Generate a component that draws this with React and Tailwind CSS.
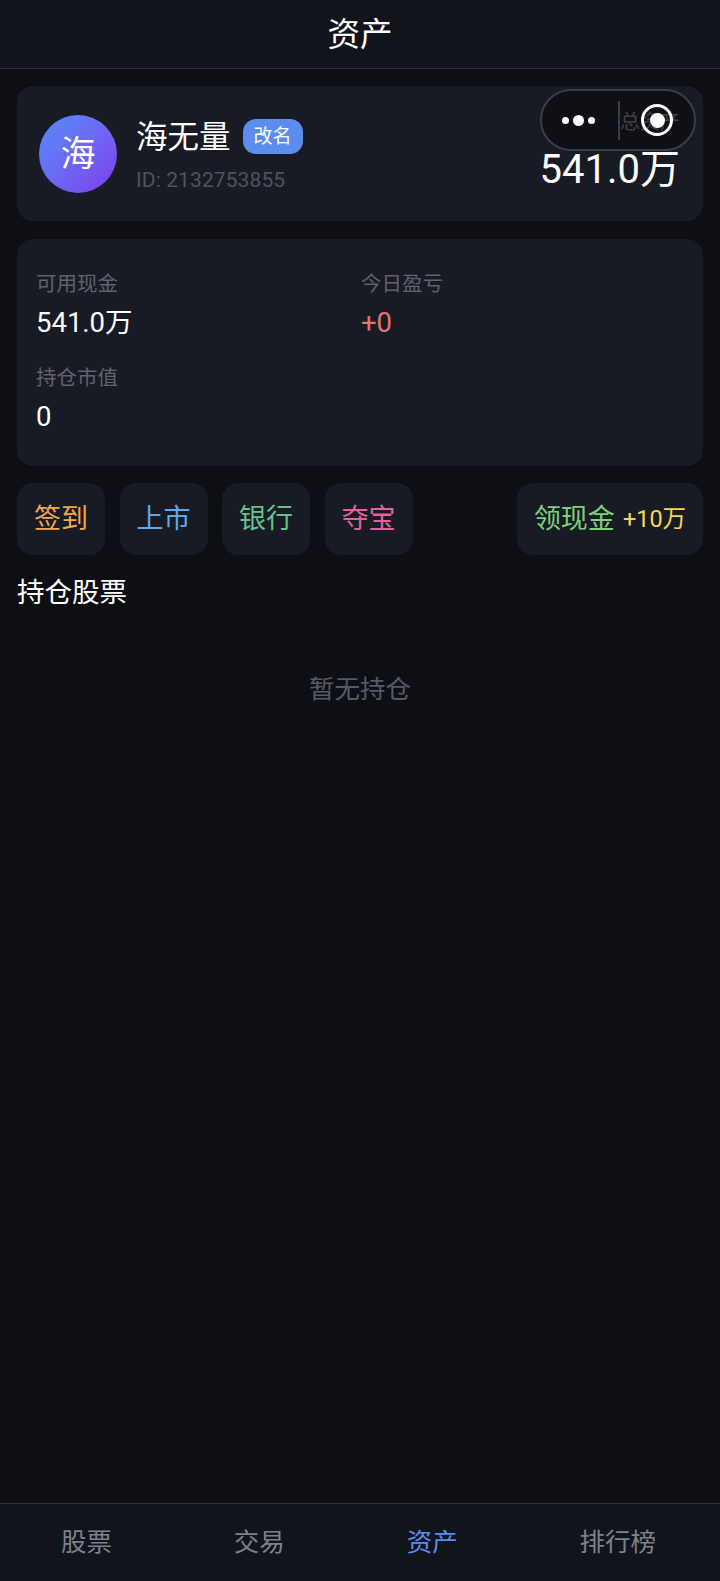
import React from "react";

const font = "font-['Roboto','Noto_Sans_CJK_SC',sans-serif]";

const actions = [
  { label: "签到", color: "text-[#eeaa50]" },
  { label: "上市", color: "text-[#5fa8ea]" },
  { label: "银行", color: "text-[#63c38c]" },
  { label: "夺宝", color: "text-[#e0629f]" },
];

const tabs = [
  { label: "股票" },
  { label: "交易" },
  { label: "资产", active: true },
  { label: "排行榜" },
];

const Stat = ({ label, value, valueClass = "text-white" }) => (
  <div>
    <div className="text-[20.5px] leading-[28px] text-[#5f636e]">{label}</div>
    <div className={`mt-[5px] text-[27.5px] leading-[40px] ${valueClass}`}>{value}</div>
  </div>
);

export default function App() {
  return (
    <div className={`relative flex min-h-[1581px] flex-col bg-[#0d0f14] ${font}`}>
      {/* Top Bar */}
      <div className="flex h-[69px] items-center justify-center border-b border-[#2d3038] bg-[#12141c] pt-[3px]">
        <h1 className="text-[32.5px] font-normal text-white">资产</h1>
      </div>

      {/* Content */}
      <div className="flex-1 px-[17px] pt-[17px]">
        {/* Profile */}
        <div className="flex h-[135px] items-center justify-between rounded-[16px] bg-[#181b24] pl-[22px] pr-[23px]">
          <div className="flex items-center gap-[19px]">
            <div className="flex h-[78px] w-[78px] items-center justify-center rounded-full bg-gradient-to-br from-[#4f8cf7] to-[#7c3aed] pt-[3px] text-[35px] text-white">
              海
            </div>
            <div className="mt-[2px]">
              <div className="flex items-center gap-[12px]">
                <span className="pt-[2px] text-[31.5px] leading-[44px] text-white">海无量</span>
                <span className="rounded-[13px] bg-[#5b8def] px-[11px] text-[19px] leading-[35px] text-white">改名</span>
              </div>
              <div className="mt-[4px] text-[21px] leading-[32px] tracking-[0.1px] text-[#4f535e]">ID: 2132753855</div>
            </div>
          </div>
          <div className="text-right">
            <div className="text-[20px] leading-[24px] text-[#b8bcc6]">总资产</div>
            <div className="mt-[8px] text-[40px] leading-[56px] text-white">541.0万</div>
          </div>
        </div>

        {/* Stats */}
        <div className="mt-[18px] grid h-[227px] grid-cols-[325px_1fr] content-start gap-y-[21px] rounded-[16px] bg-[#181b24] pl-[19px] pt-[31px]">
          <Stat label="可用现金" value="541.0万" />
          <Stat label="今日盈亏" value="+0" valueClass="text-[#e5736f]" />
          <Stat label="持仓市值" value="0" />
        </div>

        {/* Actions */}
        <div className="mt-[17px] flex h-[72px] gap-[14.5px]">
          {actions.map((a) => (
            <button key={a.label} className={`w-[88px] rounded-[16px] bg-[#181b24] pt-[1px] text-[27px] ${a.color}`}>
              {a.label}
            </button>
          ))}
          <button className="ml-auto flex w-[186px] items-center justify-center gap-[8px] rounded-[16px] bg-[#181b24] pt-[1px]">
            <span className="text-[27px] text-[#7ed07a]">领现金</span>
            <span className="text-[23.5px] text-[#f6d55c]">+10万</span>
          </button>
        </div>

        {/* Holdings */}
        <h2 className="mt-[18px] text-[27.5px] font-normal leading-[40px] text-white">持仓股票</h2>
        <div className="mt-[58px] text-center text-[25.5px] leading-[36px] text-[#565a65]">暂无持仓</div>
      </div>

      {/* Bottom Tabs */}
      <div className="flex h-[78px] items-center justify-around border-t border-[#2d3038] bg-[#12141c] pr-[3px]">
        {tabs.map((t) => (
          <span key={t.label} className={`text-[25.5px] ${t.active ? "text-[#5b8def]" : "text-[#7d818c]"}`}>
            {t.label}
          </span>
        ))}
      </div>

      {/* Mini program capsule */}
      <div className="absolute left-[540px] top-[89px] flex h-[62px] w-[156px] items-center rounded-full border-2 border-[#3c3e45] bg-[#0a0b0f]/70">
        <div className="mr-[4px] flex w-[72px] items-center justify-center gap-[4px]">
          <span className="h-[7px] w-[7px] rounded-full bg-white" />
          <span className="h-[11px] w-[11px] rounded-full bg-white" />
          <span className="h-[7px] w-[7px] rounded-full bg-white" />
        </div>
        <div className="h-[39px] w-[2px] bg-[#3c3e45]" />
        <div className="flex flex-1 items-center justify-center">
          <div className="flex h-[32px] w-[32px] items-center justify-center rounded-full border-[3px] border-white">
            <span className="h-[15px] w-[15px] rounded-full bg-white" />
          </div>
        </div>
      </div>
    </div>
  );
}
